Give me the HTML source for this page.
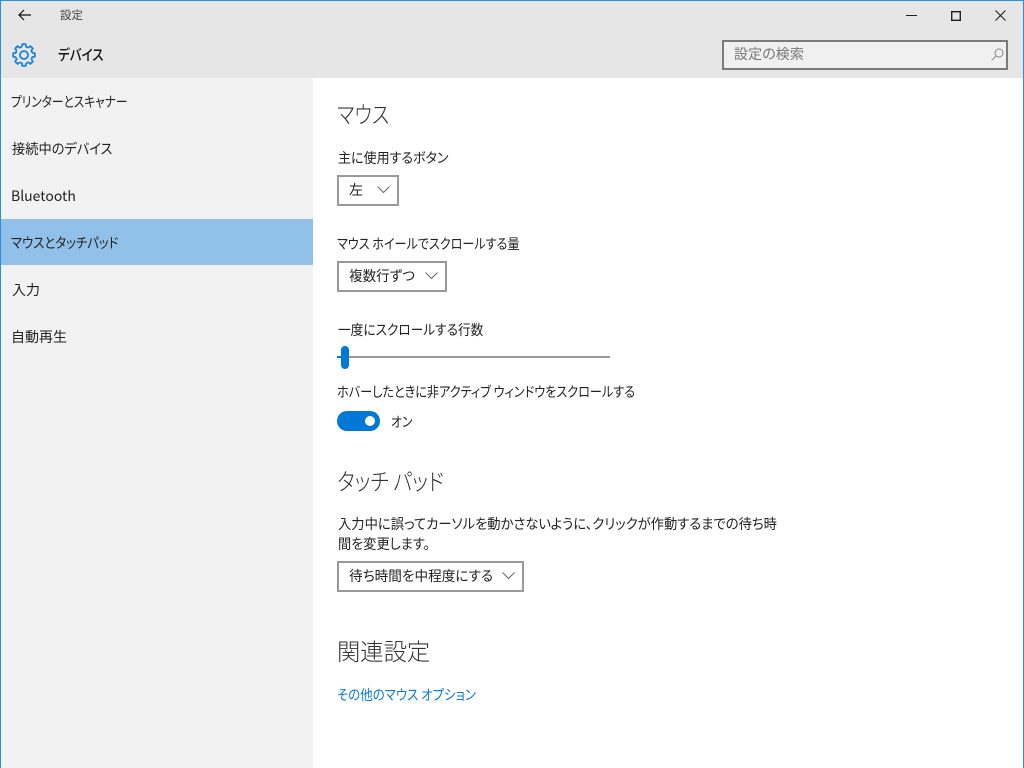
<!DOCTYPE html>
<html lang="ja"><head><meta charset="utf-8">
<style>
html,body{margin:0;padding:0;width:1024px;height:768px;overflow:hidden;background:#fff}
body{position:relative;font-family:"Liberation Sans","Noto Sans CJK JP",sans-serif;color:#1f1f1f;font-weight:300}
.t{position:absolute;white-space:nowrap;font-size:14px;line-height:20px;font-feature-settings:"palt" 1;font-family:"Noto Sans CJK JP",sans-serif;font-weight:400;color:#222;transform-origin:0 50%}
.h{font-size:23.3px;line-height:30px;font-weight:300;color:#333}
.b{position:absolute;box-sizing:border-box;border:2px solid #999;background:#fff;height:31px}
svg{position:absolute;overflow:visible}
.abs{position:absolute}
</style></head><body>
<div class="abs" style="left:0;top:0;width:1024px;height:78px;background:#e6e6e6"></div>
<div class="abs" style="left:0;top:78px;width:313px;height:690px;background:#f2f2f2"></div>
<div class="abs" style="left:0;top:219px;width:313px;height:46px;background:#91c1e9"></div>
<div class="abs" style="left:0;top:0;width:1024px;height:1px;background:#2b8fe0"></div>
<div class="abs" style="left:0;top:0;width:1px;height:768px;background:#2b8fe0"></div>
<div class="abs" style="left:1023px;top:0;width:1px;height:768px;background:#2b8fe0"></div>

<svg style="left:18px;top:9px" width="14" height="12" viewBox="0 0 14 12" fill="none" stroke="#111" stroke-width="1.2"><path d="M13 6H1M6 1L1 6l5 5"/></svg>
<div class="t" style="left:60px;top:5px;font-size:11.500px;color:#444">設定</div>

<svg style="left:12px;top:43px" width="24" height="24" viewBox="0 0 24 24" fill="none" stroke="#1a84dc" stroke-width="1.8" stroke-linejoin="round"><circle cx="12" cy="12" r="4"/><g transform="translate(12 12)"><path d="M-2.06-8.25L-1.72-10.86H1.72L2.06-8.25A8.500 8.500 0 0 1 4.38-7.29"/><path transform="rotate(45)" d="M-2.06-8.25L-1.72-10.86H1.72L2.06-8.25A8.500 8.500 0 0 1 4.38-7.29"/><path transform="rotate(90)" d="M-2.06-8.25L-1.72-10.86H1.72L2.06-8.25A8.500 8.500 0 0 1 4.38-7.29"/><path transform="rotate(135)" d="M-2.06-8.25L-1.72-10.86H1.72L2.06-8.25A8.500 8.500 0 0 1 4.38-7.29"/><path transform="rotate(180)" d="M-2.06-8.25L-1.72-10.86H1.72L2.06-8.25A8.500 8.500 0 0 1 4.38-7.29"/><path transform="rotate(225)" d="M-2.06-8.25L-1.72-10.86H1.72L2.06-8.25A8.500 8.500 0 0 1 4.38-7.29"/><path transform="rotate(270)" d="M-2.06-8.25L-1.72-10.86H1.72L2.06-8.25A8.500 8.500 0 0 1 4.38-7.29"/><path transform="rotate(315)" d="M-2.06-8.25L-1.72-10.86H1.72L2.06-8.25A8.500 8.500 0 0 1 4.38-7.29"/></g></svg>
<div class="t" style="left:58px;top:45px;font-size:15px;font-weight:500;color:#111;transform:scaleX(.836)">デバイス</div>

<svg style="left:906px;top:15px" width="11" height="1"><path d="M0 .5h11" stroke="#222" stroke-width="1"/></svg>
<svg style="left:951px;top:11px" width="10" height="10" fill="none" stroke="#222" stroke-width="1.4"><rect x=".7" y=".7" width="8.6" height="8.6"/></svg>
<svg style="left:995px;top:10px" width="11" height="11" fill="none" stroke="#222" stroke-width="1.1"><path d="M.5.5l10 10M10.500.5l-10 10"/></svg>

<div class="abs" style="left:722px;top:40px;width:286px;height:30px;box-sizing:border-box;border:2px solid #7b7b7b;background:#f0f0f0"></div>
<div class="t" style="left:734px;top:44px;color:#777;letter-spacing:.1px">設定の検索</div>
<svg style="left:991px;top:48px" width="13" height="13" fill="none" stroke="#888" stroke-width="1"><circle cx="8" cy="5" r="4"/><path d="M5 8L.7 12.300"/></svg>

<div class="t" style="left:11px;top:92px;transform:scaleX(.835)">プリンターとスキャナー</div>
<div class="t" style="left:12px;top:139px;transform:scaleX(.945)">接続中のデバイス</div>
<div class="t" style="left:11px;top:186px">Bluetooth</div>
<div class="t" style="left:11px;top:233px;transform:scaleX(.885)">マウスとタッチパッド</div>
<div class="t" style="left:12px;top:280px">入力</div>
<div class="t" style="left:11px;top:327px">自動再生</div>

<div class="t h" style="left:337px;top:98px;transform:scaleX(.833)">マウス</div>
<div class="t" style="left:338px;top:148px;transform:scaleX(.93)">主に使用するボタン</div>
<div class="b" style="left:337px;top:175px;width:62px"></div>
<div class="t" style="left:349px;top:180px">左</div>
<svg style="left:377px;top:186px" width="13" height="7" fill="none" stroke="#666"><path d="M.5.500l6 6 6-6"/></svg>

<div class="t" style="left:337px;top:234px;transform:scaleX(.863)">マウス ホイールでスクロールする量</div>
<div class="b" style="left:337px;top:261px;width:110px"></div>
<div class="t" style="left:349px;top:266px;transform:scaleX(.97)">複数行ずつ</div>
<svg style="left:425px;top:272px" width="13" height="7" fill="none" stroke="#666"><path d="M.5.500l6 6 6-6"/></svg>

<div class="t" style="left:338px;top:320px;transform:scaleX(.906)">一度にスクロールする行数</div>
<div class="abs" style="left:337px;top:356px;width:273px;height:2px;background:#999"></div>
<div class="abs" style="left:337px;top:356px;width:6px;height:2px;background:#0078d7"></div>
<div class="abs" style="left:341px;top:346px;width:8px;height:23px;border-radius:4px;background:#0078d7"></div>

<div class="t" style="left:337px;top:382px;transform:scaleX(.866)">ホバーしたときに非アクティブ ウィンドウをスクロールする</div>
<div class="abs" style="left:337px;top:411px;width:43px;height:20px;border-radius:10px;background:#0078d7"></div>
<div class="abs" style="left:365px;top:416px;width:10px;height:10px;border-radius:5px;background:#fff"></div>
<div class="t" style="left:391px;top:412px;transform:scaleX(.85)">オン</div>

<div class="t h" style="left:337px;top:465px;transform:scaleX(.864)">タッチ パッド</div>
<div class="t" style="left:338px;top:514px;transform:scaleX(.95)">入力中に誤ってカーソルを動かさないように、クリックが作動するまでの待ち時</div>
<div class="t" style="left:338px;top:534px;transform:scaleX(.94)">間を変更します。</div>
<div class="b" style="left:337px;top:561px;width:187px"></div>
<div class="t" style="left:349px;top:566px;transform:scaleX(.973)">待ち時間を中程度にする</div>
<svg style="left:502px;top:572px" width="13" height="7" fill="none" stroke="#666"><path d="M.5.500l6 6 6-6"/></svg>

<div class="t h" style="left:337px;top:635px">関連設定</div>
<div class="t" style="left:337px;top:685px;color:#0a78d7;transform:scaleX(.89)">その他のマウス オプション</div>
</body></html>
